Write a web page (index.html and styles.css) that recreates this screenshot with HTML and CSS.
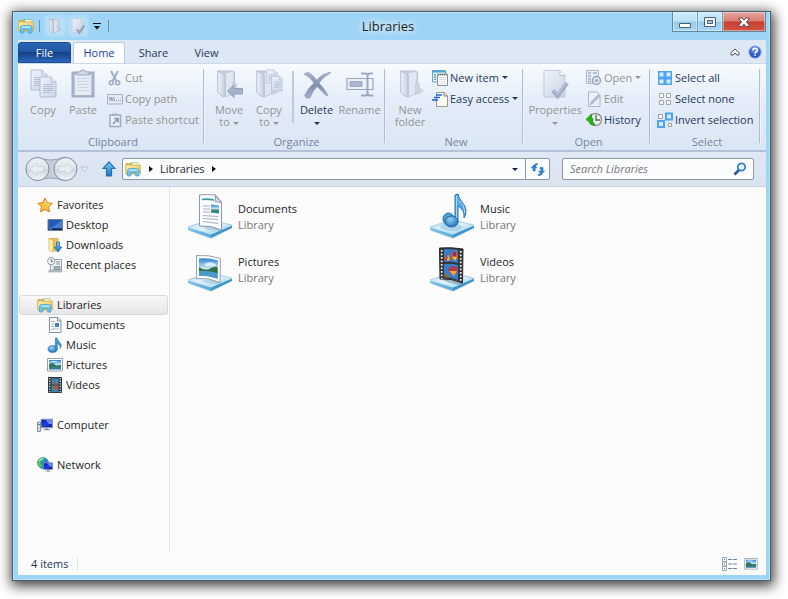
FILE: index.html
```html
<!DOCTYPE html>
<html lang="en">
<head>
    <meta charset="UTF-8">
    <meta name="viewport" content="width=device-width, initial-scale=1.0">
    <title>Libraries</title>
    <link rel="stylesheet" href="styles.css">
</head>
<body>
    <!-- shared icons -->
    <svg class="sprite" aria-hidden="true">
        <defs>
            <linearGradient id="gGrey" x1="0" y1="0" x2="1" y2="1">
                <stop offset="0" stop-color="#f1f5fa"/><stop offset="1" stop-color="#c2cde0"/>
            </linearGradient>
            <linearGradient id="gFolder" x1="0" y1="0" x2="1" y2="0">
                <stop offset="0" stop-color="#f3f6fa"/><stop offset="1" stop-color="#b9c4d8"/>
            </linearGradient>
            <linearGradient id="gSteel" x1="0" y1="0" x2="0" y2="1">
                <stop offset="0" stop-color="#a9b6cd"/><stop offset="0.5" stop-color="#7f8fae"/><stop offset="1" stop-color="#a5b2ca"/>
            </linearGradient>
            <linearGradient id="gYellow" x1="0" y1="0" x2="1" y2="1">
                <stop offset="0" stop-color="#fdf3b4"/><stop offset="1" stop-color="#e0b84c"/>
            </linearGradient>
            <linearGradient id="gBlue" x1="0" y1="0" x2="0" y2="1">
                <stop offset="0" stop-color="#7fd2f7"/><stop offset="1" stop-color="#1672bd"/>
            </linearGradient>
            <linearGradient id="gTray" x1="0" y1="0" x2="1" y2="1">
                <stop offset="0" stop-color="#b5dcf0"/><stop offset="0.5" stop-color="#e3f3fb"/><stop offset="1" stop-color="#8cc7e8"/>
            </linearGradient>
            <linearGradient id="gTrayL" x1="0" y1="0" x2="1" y2="0">
                <stop offset="0" stop-color="#7fc1e6"/><stop offset="1" stop-color="#58aadb"/>
            </linearGradient>
            <linearGradient id="gPhoto" x1="0" y1="0" x2="0" y2="1">
                <stop offset="0" stop-color="#2c7fd0"/><stop offset="0.5" stop-color="#cdeaf7"/><stop offset="0.6" stop-color="#3f8a66"/><stop offset="1" stop-color="#2d79a5"/>
            </linearGradient>
            <linearGradient id="gScreen" x1="0" y1="0" x2="1" y2="1">
                <stop offset="0" stop-color="#0a14a8"/><stop offset="0.5" stop-color="#1c3fe0"/><stop offset="1" stop-color="#0b1790"/>
            </linearGradient>
            <radialGradient id="gBall" cx="0.4" cy="0.3" r="0.8">
                <stop offset="0" stop-color="#8fd3f6"/><stop offset="1" stop-color="#1465b0"/>
            </radialGradient>
            <radialGradient id="gHelp" cx="0.5" cy="0.3" r="0.7">
                <stop offset="0" stop-color="#7ba6f2"/><stop offset="1" stop-color="#1238b8"/>
            </radialGradient>
            <linearGradient id="gNav" x1="0" y1="0" x2="0" y2="1">
                <stop offset="0" stop-color="#eef2f6"/><stop offset="0.48" stop-color="#dde4ec"/><stop offset="0.52" stop-color="#cdd7e1"/><stop offset="1" stop-color="#f3f7fa"/>
            </linearGradient>
        </defs>

        <symbol id="i-libraries" viewBox="0 0 16 16">
            <path d="M1 2.500h4l1 1h7.500v9.500H1z" fill="#e3be55" stroke="#c9a548" stroke-width=".8"/>
            <path d="M5.500 1.500h8v4h-8z" fill="#7cb85a"/>
            <path d="M7 2h6.500v3H7z" fill="#f7f2d0"/>
            <path d="M.6 4h14.800v8.500H.6z" fill="url(#gYellow)" stroke="#d6b04c" stroke-width=".8"/>
            <path d="M2.500 15V10q0-2.500 2.500-2.500h6.500Q14 7.500 14 10v5h-3.300v-3.500H5.800V15z" fill="#6cc4ec" stroke="#3f9fd2" stroke-width=".7"/>
            <path d="M4 9h8.500" stroke="#c5efff" stroke-width="1.300"/>
        </symbol>
        <symbol id="i-folder-grey" viewBox="0 0 28 32">
            <path d="M12 26h13l3-3-4-3z" fill="#a9b6cc" opacity=".5"/>
            <path d="M3 2h15l3 1v22l-9 4z" fill="#c3cdde" stroke="#a2b0c8"/>
            <path d="M8 5l11-3 1.500 1.500V26L11 30z" fill="#dde4ee" stroke="#a9b6cc" stroke-width=".8"/>
            <path d="M3 2l8 4v22.500l-2 1.500L3 25z" fill="url(#gFolder)" stroke="#9dabc4"/>
            <path d="M19 14l4 2v10l-4 1z" fill="#c7d0e0" stroke="#a9b6cc" stroke-width=".7"/>
        </symbol>
        <symbol id="i-page" viewBox="0 0 18 22">
            <path d="M1 1h11l5 5v15H1z" fill="url(#gGrey)" stroke="#a3b2cb"/>
            <path d="M12 1v5h5" fill="#dfe6f0" stroke="#a3b2cb"/>
            <path d="M4 8.500h10M4 10.500h10M4 12.500h10M4 14.500h10M4 16.500h7" stroke="#a3b2cb"/>
        </symbol>
        <symbol id="i-props" viewBox="0 0 28 30">
            <path d="M3 1.500h16l5 5V28H3z" fill="url(#gGrey)" stroke="#b3c0d5"/>
            <path d="M19 1.500v5h5" fill="#fff" stroke="#a7b5cd"/>
            <path d="M12 21.500l4.500 5.500L26 14" fill="none" stroke="#8e9dbb" stroke-width="4.200"/>
            <path d="M13 21.500l3.500 4L25 14" fill="none" stroke="#a8b5cd" stroke-width="1.500"/>
        </symbol>
        <symbol id="i-photo" viewBox="0 0 16 14">
            <path d="M.5.500h15v12.500H.5z" fill="#fff" stroke="#93a1ae"/>
            <path d="M2 2h12v9.500H2z" fill="url(#gPhoto)"/>
            <path d="M2 6.500q3-3 6 0t6 0V9H2z" fill="#35765a"/>
            <path d="M4 3h6v1H4z" fill="#e8f6ff" opacity=".8"/>
        </symbol>
        <symbol id="i-note" viewBox="0 0 16 16">
            <ellipse cx="5.600" cy="12" rx="4.600" ry="3.500" fill="url(#gBall)" stroke="#2573b4" stroke-width=".6"/>
            <path d="M8.400 12V1h1.800q.4 2.500 2.300 4.300 2.800 3 1 6.200.2-3.500-3.300-5V12z" fill="#3a97d7" stroke="#2470b0" stroke-width=".6"/>
        </symbol>
        <symbol id="i-film" viewBox="0 0 16 16">
            <path d="M1 0h14v16H1z" fill="#2d3940"/>
            <path d="M4.500 1.500h7v6h-7z" fill="#3c88b8"/><path d="M4.500 8.500h7V15h-7z" fill="#4283b1"/>
            <path d="M5 1.500l6 6h-3zM6 8.500h5.500v3L8 13z" fill="#b0563c"/>
            <path d="M2.700 1v15M13.300 1v15" stroke="#d5e6ec" stroke-width="1.300" stroke-dasharray="1.300 1.300"/>
        </symbol>
        <symbol id="i-tray" viewBox="0 0 46 20">
            <path d="M2 12l22 8 21-11-1-2z" fill="#9aa7b0" opacity=".35"/>
            <path d="M1 8L22 1l23 5-21 9z" fill="url(#gTray)" stroke="#86bfdf" stroke-width=".7"/>
            <path d="M1 8l23 7v4L1 11z" fill="url(#gTrayL)"/>
            <path d="M24 15l21-9v3L24 19z" fill="#3d96cd"/>
            <path d="M1 8l23 7 21-9" fill="none" stroke="#e6f7ff" stroke-width=".8"/>
        </symbol>
        <symbol id="i-monitor" viewBox="0 0 12 11">
            <path d="M.5.500h11v8H.5z" fill="url(#gScreen)" stroke="#8c97a6"/>
            <path d="M5 1l3 4h3V1z" fill="#6a87f5"/>
            <path d="M5 9h2v1h2v1H3v-1h2z" fill="#7d8894"/>
        </symbol>
    </svg>

    <div class="window">
        <header class="titlebar">
            <div class="quick-access">
                <svg class="icon"><use href="#i-libraries"/></svg>
                <span class="quick-sep"></span>
                <button class="quick-btn" aria-label="New folder"><svg class="icon" viewBox="0 0 28 32"><use href="#i-folder-grey"/></svg></button>
                <button class="quick-btn" aria-label="Properties"><svg class="icon" viewBox="0 0 28 30"><use href="#i-props"/></svg></button>
                <button class="quick-more" aria-label="Customize">
                    <svg width="8" height="7" viewBox="0 0 8 7"><path d="M0 .5h8" stroke="#111"/><path d="M1 3h6L4 6.500z" fill="#111"/></svg>
                </button>
                <span class="quick-sep"></span>
            </div>
            <h1 class="title">Libraries</h1>
            <div class="window-buttons">
                <button class="win-btn" aria-label="Minimize">
                    <svg width="14" height="14" viewBox="0 0 14 14"><path d="M1.500 8.500h11v4h-11z" fill="#fff" stroke="#4b5f73"/></svg>
                </button>
                <button class="win-btn" aria-label="Maximize">
                    <svg width="14" height="14" viewBox="0 0 14 14"><path d="M1.500 2.500h11v9h-11z" fill="#fff" stroke="#4b5f73"/><path d="M4.500 5.500h5v3h-5z" fill="#9ec9e8" stroke="#4b5f73"/></svg>
                </button>
                <button class="win-btn close" aria-label="Close">
                    <svg width="14" height="14" viewBox="0 0 14 14"><path d="M2 3h3l2 2 2-2h3v1L9.500 7l2.500 3v1.500H9l-2-2.300-2 2.300H2V10l2.500-3L2 4z" fill="#fff" stroke="#5d3a44" stroke-width=".9"/></svg>
                </button>
            </div>
        </header>

        <div class="tabs">
            <button class="tab file">File</button>
            <button class="tab active">Home</button>
            <button class="tab">Share</button>
            <button class="tab">View</button>
            <div class="tab-tools">
                <button aria-label="Minimize the ribbon">
                    <svg width="10" height="8" viewBox="0 0 10 8"><path d="M1 4.500L5 1l4 3.500V7H7L5 5.200 3 7H1z" fill="#fff" stroke="#4a4f58"/></svg>
                </button>
                <button aria-label="Help">
                    <svg width="14" height="14" viewBox="0 0 14 14"><circle cx="7" cy="7" r="6.300" fill="url(#gHelp)" stroke="#b5c6e2"/><path d="M4.800 5.500Q4.800 3.300 7 3.300t2.300 1.900Q9.300 6.300 8 7q-.9.500-.9 1.500M7.100 9.600v1.500" fill="none" stroke="#fff" stroke-width="1.500"/></svg>
                </button>
            </div>
        </div>

        <div class="ribbon">
            <section class="group clipboard">
                <div class="controls">
                    <button class="big" disabled>
                        <svg class="big-icon" viewBox="0 0 28 30"><use href="#i-page" x="1" y="0" width="18" height="22"/><use href="#i-page" x="10" y="7" width="18" height="22"/></svg>
                        <span>Copy</span>
                    </button>
                    <button class="big" disabled>
                        <svg class="big-icon" viewBox="0 0 28 30">
                            <path d="M3.500 3.500h21v24h-21z" fill="#aab7cd" stroke="#8e9dba" stroke-width="2"/>
                            <path d="M6 6h16v20H6z" fill="#e6ecf4"/>
                            <path d="M8 9.500h12M8 12.500h12M8 15.500h12M8 18.500h12M8 21.500h12" stroke="#c3cddd"/>
                            <path d="M8 6V3h3q0-2 3-2t3 2h3v3z" fill="#ccd5e3" stroke="#8696b4"/>
                        </svg>
                        <span>Paste</span>
                    </button>
                    <div class="stack">
                        <button class="small" disabled>
                            <svg class="icon" viewBox="0 0 16 16"><path d="M4 1l5.500 10M11 1L5.500 11" stroke="#8d9cb9" stroke-width="2"/><circle cx="4.300" cy="12.700" r="2" fill="none" stroke="#8d9cb9" stroke-width="1.500"/><circle cx="10.700" cy="12.700" r="2" fill="none" stroke="#8d9cb9" stroke-width="1.500"/></svg>
                            Cut
                        </button>
                        <button class="small" disabled>
                            <svg class="icon" viewBox="0 0 16 16"><path d="M.5 3.500h15v9.500H.5z" fill="#e3eaf3" stroke="#93a2be"/><path d="M2.500 6l1 4 1-4 1 4M6.500 6l1 4" fill="none" stroke="#6f7f9e"/><path d="M9 9.500h1M11 9.500h1M13 9.500h1" stroke="#6f7f9e"/></svg>
                            Copy path
                        </button>
                        <button class="small" disabled>
                            <svg class="icon" viewBox="0 0 16 16"><path d="M3 3h10.500v11.500H3z" fill="#f0f4f9" stroke="#8e9dba" stroke-width="1.600"/><path d="M5.500 3.500V2h5v1.500z" fill="#c3cddd" stroke="#8e9dba"/><path d="M7 6.500h4v4M10.500 7L6 12" fill="none" stroke="#7484a4" stroke-width="1.700"/></svg>
                            Paste shortcut
                        </button>
                    </div>
                </div>
                <h2>Clipboard</h2>
            </section>

            <section class="group organize">
                <div class="controls">
                    <button class="big" disabled>
                        <svg class="big-icon" viewBox="0 0 28 30"><use href="#i-folder-grey" x="0" y="0" width="26" height="30"/><path d="M12.500 22l6.500-6v3.500h8.500v5.500H19v3.500z" fill="#93a2be" stroke="#7c8cab"/></svg>
                        <span>Move<br>to <i class="arrow"></i></span>
                    </button>
                    <button class="big" disabled>
                        <svg class="big-icon" viewBox="0 0 28 30"><use href="#i-folder-grey" x="-1" y="0" width="26" height="30"/><use href="#i-page" x="11" y="0" width="12" height="15"/><use href="#i-page" x="16" y="6" width="13" height="17"/></svg>
                        <span>Copy<br>to <i class="arrow"></i></span>
                    </button>
                    <span class="inner-sep"></span>
                    <button class="big">
                        <svg class="big-icon" viewBox="0 0 28 30"><path d="M1 5l4-2q5 3 8.500 8Q20 4 28 3l-1 1.500Q21 7 16 14q6 6 9 12.500l-1.500.500q-5-5-9.500-9.500Q9 23 7 29q-4 1-5.500-2Q4 20 11 14 7 8 1 5z" fill="url(#gSteel)" stroke="#8f9eba" stroke-width=".6"/></svg>
                        <span>Delete<br><i class="arrow"></i></span>
                    </button>
                    <button class="big" disabled>
                        <svg class="big-icon" viewBox="0 0 28 30"><path d="M1 9.500h26v11H1z" fill="#edf2f8" stroke="#8493b1" stroke-width="1.200"/><path d="M4 12.500h12v5H4z" fill="#9caac3" stroke="#8797b4"/><path d="M15 4.500h4q2.500 0 2.500 2 0-2 2.500-2h3M21.500 6v19M15 26.500h4q2.500 0 2.500-2 0 2 2.500 2h3" fill="none" stroke="#8797b4" stroke-width="2"/></svg>
                        <span>Rename</span>
                    </button>
                </div>
                <h2>Organize</h2>
            </section>

            <section class="group new">
                <div class="controls">
                    <button class="big" disabled>
                        <svg class="big-icon" viewBox="0 0 28 30"><use href="#i-folder-grey" x="2" y="0" width="26" height="30"/></svg>
                        <span>New<br>folder</span>
                    </button>
                    <div class="stack">
                        <button class="small">
                            <svg class="icon" viewBox="0 0 16 16"><path d="M.5.500h13V12H.5z" fill="#e3f2fa" stroke="#68a9cf"/><path d="M.5 1.500h13" stroke="#49a4d6" stroke-width="2"/><path d="M3 4v6" stroke="#5c9dc4" stroke-width="2" stroke-dasharray="1.500 1"/><path d="M5.500 4.500h10v11h-10z" fill="#fff" stroke="#8d8d8d"/><path d="M6 4.500h9" stroke="#777" stroke-width="2" stroke-dasharray="1 1"/><path d="M7 7.500h7M7 9.500h7M7 11.500h7M7 13.500h7" stroke="#d0d0d0" stroke-width=".8"/></svg>
                            New item <i class="arrow"></i>
                        </button>
                        <button class="small">
                            <svg class="icon" viewBox="0 0 16 16"><path d="M4.500 1.500h8l3 3v11h-11z" fill="#fdfdf8" stroke="#9a9a90"/><path d="M12 1.500V5h3.500" fill="#fff" stroke="#77776d"/><path d="M4 4h6M2 6.500h6M0 9h6" stroke="#1767dc" stroke-width="1.300"/></svg>
                            Easy access <i class="arrow"></i>
                        </button>
                    </div>
                </div>
                <h2>New</h2>
            </section>

            <section class="group open">
                <div class="controls">
                    <button class="big wide" disabled>
                        <svg class="big-icon" viewBox="0 0 28 30"><use href="#i-props"/></svg>
                        <span>Properties<br><i class="arrow"></i></span>
                    </button>
                    <div class="stack">
                        <button class="small" disabled>
                            <svg class="icon" viewBox="0 0 16 16"><path d="M.5.500h12v13H.5z" fill="#e6ecf4" stroke="#9aa8c1"/><path d="M2 3h3M7 3h4M2 6h3M2 9h3M2 11.500h3" stroke="#8c9bb8" stroke-width="1.300"/><circle cx="10.500" cy="10.500" r="4" fill="#dae2ed" stroke="#8493b1" stroke-width="1.500"/><circle cx="10.500" cy="10.500" r="1.300" fill="#7585a6"/></svg>
                            Open <i class="arrow"></i>
                        </button>
                        <button class="small" disabled>
                            <svg class="icon" viewBox="0 0 16 16"><path d="M2.500 1h8.500l3 3v11.500H2.500z" fill="#edf2f8" stroke="#9dabc4"/><path d="M13.500 5L7 12l-2.500 1.500L5.500 11 12 4z" fill="#c0cadb" stroke="#8695b2"/></svg>
                            Edit
                        </button>
                        <button class="small">
                            <svg class="icon" viewBox="0 0 16 16"><circle cx="9.500" cy="7.500" r="6" fill="#eef3ef" stroke="#899b91" stroke-width="1.500"/><path d="M10 3v5h4" fill="none" stroke="#596b62" stroke-width="1.400"/><path d="M0 7.500L5.500 2v3Q8 8 6.500 9.500L9 13q-5 .5-6-3.500z" fill="#22b90f" stroke="#128407" stroke-width=".7"/></svg>
                            History
                        </button>
                    </div>
                </div>
                <h2>Open</h2>
            </section>

            <section class="group select">
                <div class="controls">
                    <div class="stack">
                        <button class="small">
                            <svg class="icon" viewBox="0 0 16 16"><path d="M1 1h14v14H1z" fill="#4ba5f3"/><path d="M2.500 2.500h4v4h-4zM9.500 2.500h4v4h-4zM2.500 9.500h4v4h-4zM9.500 9.500h4v4h-4z" fill="#d5ecff"/></svg>
                            Select all
                        </button>
                        <button class="small">
                            <svg class="icon" viewBox="0 0 16 16"><path d="M2.500 2.500h4v4h-4zM9.500 2.500h4v4h-4zM2.500 9.500h4v4h-4zM9.500 9.500h4v4h-4z" fill="#f7f7f7" stroke="#a5a5a5"/></svg>
                            Select none
                        </button>
                        <button class="small">
                            <svg class="icon" viewBox="0 0 16 16"><path d="M1.500 2.500h4v4h-4zM11.500 11.500h3v3h-3z" fill="#f7f7f7" stroke="#a0a0a0"/><path d="M9 1.500h6v6H9zM1 9h6v6H1z" fill="#d5ecff" stroke="#4ba5f3" stroke-width="2"/></svg>
                            Invert selection
                        </button>
                    </div>
                </div>
                <h2>Select</h2>
            </section>
        </div>

        <div class="navbar">
            <div class="history">
                <svg width="66" height="26" viewBox="0 0 66 26">
                    <path d="M12 1q13 6 28 0v24q-15-6-28 0z" fill="#c3ced9" stroke="#98a4b1"/>
                    <circle cx="12.500" cy="13" r="11.500" fill="url(#gNav)" stroke="#818c98"/>
                    <circle cx="40.500" cy="13" r="11.500" fill="url(#gNav)" stroke="#818c98"/>
                    <path d="M5 13l7-6v3.500h7v5h-7V19z" fill="#e9eef2" stroke="#c8d0d8" stroke-width=".8"/>
                    <path d="M48 13l-7-6v3.500h-7v5h7V19z" fill="#e9eef2" stroke="#c8d0d8" stroke-width=".8"/>
                    <path d="M56 11h7l-3.500 4.500z" fill="#eef3f8" stroke="#b4c0cd"/>
                </svg>
            </div>
            <button class="up" aria-label="Up">
                <svg width="14" height="16" viewBox="0 0 14 16"><path d="M7 1L1 7.500h3.500V15h5V7.500H13z" fill="url(#gBlue)" stroke="#2872b4" stroke-width="1.200"/></svg>
            </button>
            <div class="address">
                <svg class="icon"><use href="#i-libraries"/></svg>
                <i class="crumb-arrow"></i>
                <a href="#">Libraries</a>
                <i class="crumb-arrow"></i>
                <button class="drop" aria-label="Previous locations"><i class="arrow dark"></i></button>
                <button class="refresh" aria-label="Refresh">
                    <svg width="14" height="14" viewBox="0 0 14 14"><path d="M0 6L3 3l3 3H4.200v3H2V6zM3 3.500Q4 1 6.500 1.500v1Q5 2.500 4.200 5z" fill="#2f86d6" stroke="#2369b4" stroke-width=".5"/><path d="M7.500 9l3 3.500 3-3.500H12V5.500H9V7h1v2zM10.500 12.500Q9 14 7 13.500v-1q1.500 0 2.500-1.500z" fill="#2f86d6" stroke="#2369b4" stroke-width=".5"/></svg>
                </button>
            </div>
            <label class="search">
                <input type="search" placeholder="Search Libraries" aria-label="Search Libraries">
                <svg width="14" height="14" viewBox="0 0 14 14"><path d="M1.500 12.500L6 8" stroke="#1f56a5" stroke-width="2.600"/><circle cx="8.500" cy="5" r="3.700" fill="#eaf5fd" stroke="#3482c8" stroke-width="1.800"/></svg>
            </label>
        </div>

        <div class="content">
            <nav class="sidebar">
                <ul>
                    <li><a href="#" class="root"><svg class="icon" viewBox="0 0 16 16"><path d="M8 1l2.200 4.700 5.100.6-3.800 3.500 1 5.100L8 12.400l-4.500 2.500 1-5.100L.7 6.300l5.100-.6z" fill="#fbc43c" stroke="#d77f22"/><path d="M8 3.500l1.500 3.300 3 .5" fill="none" stroke="#fff1a5"/></svg>Favorites</a></li>
                    <li><a href="#"><svg class="icon" viewBox="0 0 16 16"><path d="M1 2.500h14.500v11H1z" fill="#2459b8" stroke="#6b7f99"/><path d="M1.500 11q6-1 13.500-8v8z" fill="#477dd8"/><path d="M1.500 11.500H15v1.500H1.500z" fill="#1a2740"/><path d="M2 12h3" stroke="#4eaadb"/></svg>Desktop</a></li>
                    <li><a href="#"><svg class="icon" viewBox="0 0 16 16"><path d="M2 1.500h9V14H5z" fill="#e8bf50" stroke="#c8a046" stroke-width=".7"/><path d="M2 1.500l4 1.500v12l-4-2z" fill="#fff0b0" stroke="#d6b252" stroke-width=".7"/><path d="M9.500 5h3v5H15l-4 5-4-5h2.500z" fill="url(#gBlue)" stroke="#226eb0" stroke-width=".8"/></svg>Downloads</a></li>
                    <li><a href="#"><svg class="icon" viewBox="0 0 16 16"><path d="M4.500 2.500h10v12h-11v-3z" fill="#edf2f4" stroke="#93a2ac"/><path d="M2 13h13v2H2z" fill="#b4c2ca" stroke="#8c9aa4" stroke-width=".6"/><path d="M7 9.500h6v3H7zM9 5h4M9 7h4" fill="#a4b3bd" stroke="#8b99a3"/><circle cx="4.200" cy="4.200" r="3.600" fill="#f2f7fa" stroke="#8f9da8"/><path d="M4.200 2v2.500H6" fill="none" stroke="#5c6b77"/></svg>Recent places</a></li>
                </ul>
                <ul>
                    <li><a href="#" class="root current"><svg class="icon"><use href="#i-libraries"/></svg>Libraries</a></li>
                    <li><a href="#"><svg class="icon" viewBox="0 0 16 16"><path d="M2.500.5H11l3 3v12H2.500z" fill="#fafcfd" stroke="#82909b"/><path d="M10.500.500V4H14" fill="#dde6ec" stroke="#82909b"/><path d="M4 4.500h4M4 7h3M4 9.500h3M4 12h8" stroke="#a9b5c0"/><path d="M8 6h4v4H8z" fill="#3f7cc5"/></svg>Documents</a></li>
                    <li><a href="#"><svg class="icon"><use href="#i-note"/></svg>Music</a></li>
                    <li><a href="#"><svg class="icon"><use href="#i-photo" y="1" width="16" height="14"/></svg>Pictures</a></li>
                    <li><a href="#"><svg class="icon"><use href="#i-film"/></svg>Videos</a></li>
                </ul>
                <ul>
                    <li><a href="#" class="root"><svg class="icon" viewBox="0 0 16 16"><path d="M.5 5h3v9.500h-3z" fill="#d3dbe1" stroke="#83909b"/><path d="M1 7.500h2" stroke="#31a34d"/><use href="#i-monitor" x="3.500" y="1" width="12.500" height="13"/></svg>Computer</a></li>
                </ul>
                <ul>
                    <li><a href="#" class="root"><svg class="icon" viewBox="0 0 16 16"><circle cx="6" cy="6" r="5.500" fill="#2f82da" stroke="#2b68ad" stroke-width=".6"/><path d="M2 2.500Q5-.5 8 1L6 4 3 5 5 8l-1 3Q.5 9 .8 6z" fill="#4bd04c"/><path d="M2 4q2-3 4-2.500" fill="none" stroke="#c8f8ef"/><use href="#i-monitor" x="6" y="4.500" width="10" height="11"/></svg>Network</a></li>
                </ul>
            </nav>

            <main class="tiles">
                <a href="#" class="tile">
                    <svg class="tile-icon" viewBox="0 0 46 46">
                        <use href="#i-tray" x="0" y="26" width="46" height="20"/>
                        <path d="M15 34q11-3 20 2l-2 2-12-1z" fill="#8eb8cf" opacity=".5"/>
                        <path d="M12.500 2q8-1 16 0l6 7V37q-11-5-22-4z" fill="#fbfcff" stroke="#8e98ad"/>
                        <path d="M28 2.500q1 4 0 6l6.500 1z" fill="#d8e3ee" stroke="#8e98ad"/>
                        <path d="M15 6.500q5-1 12 .5" fill="none" stroke="#3e9a9e" stroke-width="1.600"/>
                        <path d="M16 13h7M16 16h7M16 19h7M16 22.500l15 1M16 25.500l15 1M16 28.500l15 2" stroke="#a9a9cb"/>
                        <path d="M24 11.500l8 1v8l-8-1z" fill="url(#gPhoto)"/>
                    </svg>
                    <span class="tile-text"><b>Documents</b><small>Library</small></span>
                </a>
                <a href="#" class="tile">
                    <svg class="tile-icon" viewBox="0 0 46 46">
                        <use href="#i-tray" x="0" y="26" width="46" height="20"/>
                        <ellipse cx="22" cy="34" rx="11" ry="4" fill="#6daed5" opacity=".4"/>
                        <path d="M26 29V2l3-1q1 5 4 8 7 8 2 16 1-8-6-12v17z" fill="#59aae2" stroke="#2b76b8"/>
                        <path d="M27.500 3v23M30 8q6 4 5.500 12" fill="none" stroke="#a6ddfb"/>
                        <ellipse cx="19.500" cy="26" rx="5.500" ry="6" fill="#509fd7" stroke="#236eae"/>
                        <ellipse cx="22.500" cy="28.500" rx="6.500" ry="5.500" fill="url(#gBall)" stroke="#2167a7"/>
                    </svg>
                    <span class="tile-text"><b>Music</b><small>Library</small></span>
                </a>
                <a href="#" class="tile">
                    <svg class="tile-icon" viewBox="0 0 46 46">
                        <use href="#i-tray" x="0" y="26" width="46" height="20"/>
                        <path d="M14 35q11-3 20 1l-2 2-12-1z" fill="#8eb8cf" opacity=".5"/>
                        <path d="M9.500 9.500q12-1 24 3l-.5 24q-11-5-23.500-4z" fill="#fdfeff" stroke="#98a2ad"/>
                        <path d="M12 12.500q10-1 19 2l-.5 18q-9-3-18.500-3z" fill="url(#gPhoto)"/>
                        <path d="M12 21q5 4 9 3 5-4 9.500-3v6q-9 3-18.500 0z" fill="#326f43"/>
                        <path d="M12 25q8-1 18.500 2v5.500q-9-3-18.500-3z" fill="#4b9acb"/>
                        <path d="M17 18l6-2 6 2-1 2h-9z" fill="#fff" opacity=".7"/>
                    </svg>
                    <span class="tile-text"><b>Pictures</b><small>Library</small></span>
                </a>
                <a href="#" class="tile">
                    <svg class="tile-icon" viewBox="0 0 46 46">
                        <use href="#i-tray" x="0" y="26" width="46" height="20"/>
                        <path d="M14 34q11-2 20 3l-3 2-13-3z" fill="#5e7f92" opacity=".5"/>
                        <path d="M10.500 2q12-1 23.500 1l-.5 34q-11-5-22.500-4z" fill="#333435" stroke="#272a2d"/>
                        <path d="M15 3q7-.5 14 1v13q-7-2-14-1zM15 18q7-1 14 1v15q-7-3-14-3z" fill="#337fcb"/>
                        <path d="M15 14l4-7 2 8z" fill="#d33f35"/><path d="M19 8l2 6-3 1z" fill="#f4ba31"/>
                        <ellipse cx="25.500" cy="9.500" rx="3.500" ry="4.500" fill="#d35b27"/><path d="M23 11h5l-2 4z" fill="#f0bc42"/><path d="M24 6h3v4h-3z" fill="#70388a"/>
                        <ellipse cx="24" cy="24" rx="4.500" ry="4" fill="#b83845"/><path d="M20 25h8l-3 5z" fill="#eda53c"/><path d="M15 27l6 3-1 2-5-1z" fill="#7f6a4e"/>
                        <path d="M12.700 4v29M31.700 5v30" stroke="#f2f6f8" stroke-width="1.700" stroke-dasharray="1.700 1.800"/>
                    </svg>
                    <span class="tile-text"><b>Videos</b><small>Library</small></span>
                </a>
            </main>
        </div>

        <footer class="statusbar">
            <span class="count">4 items</span>
            <div class="views">
                <button aria-label="Details view">
                    <svg width="16" height="14" viewBox="0 0 16 14"><path d="M.5.500h4v4h-4zM.5 5h4v4h-4zM.5 9.500h4v4h-4z" fill="#fff" stroke="#95a2b4"/><path d="M2 2.500h1M2 11.500h1" stroke="#3f7fbb"/><path d="M2 7h1" stroke="#d33"/><path d="M6 2.500h4M11 2.500h4M6 7h4M11 7h4M6 11.500h4M11 11.500h4" stroke="#77808f" stroke-width="1.200"/></svg>
                </button>
                <button aria-label="Large icons view">
                    <svg width="14" height="12" viewBox="0 0 16 14"><use href="#i-photo"/></svg>
                </button>
            </div>
        </footer>
    </div>
</body>
</html>
```

FILE: styles.css
```css
* {
    margin: 0;
    padding: 0;
    box-sizing: border-box;
}

body {
    min-height: 100vh;
    padding: 11px 17px 18px 12px;
    display: flex;
    background: #fff;
    font-family: 'Segoe UI', 'Open Sans', 'Noto Sans', sans-serif;
    font-size: 11px;
    line-height: 12px;
    color: #1e1e1e;
}

button {
    border: none;
    background: none;
    font: inherit;
    color: inherit;
    display: flex;
    align-items: center;
    justify-content: center;
    white-space: nowrap;
}

a {
    color: inherit;
    text-decoration: none;
}

ul {
    list-style: none;
}

svg {
    display: block;
    flex: none;
}

.sprite {
    position: absolute;
    width: 0;
    height: 0;
}

.icon {
    width: 16px;
    height: 16px;
}

.arrow {
    display: inline-block;
    border: 3px solid transparent;
    border-top-color: currentColor;
    border-bottom: none;
    vertical-align: middle;
}

/* window frame */
.window {
    flex: 1;
    min-width: 0;
    display: flex;
    flex-direction: column;
    padding: 0 4px 5px 5px;
    background: #9ed4f6;
    border: 1px solid #45606f;
    box-shadow: inset 0 0 0 1px #b9e2fa, 1px 3px 12px 2px rgba(0, 0, 0, 0.75);
}

.titlebar {
    height: 28px;
    display: grid;
    grid-template-columns: 1fr auto 1fr;
    align-items: center;
}

.quick-access {
    display: flex;
    align-items: center;
    gap: 5px;
}

.quick-sep {
    width: 1px;
    height: 12px;
    background: #6a8fa8;
}

.quick-btn {
    width: 16px;
    margin-left: 2px;
    background: rgba(255, 255, 255, 0.3);
    box-shadow: 0 0 4px 2px rgba(255, 255, 255, 0.3);
}

.quick-more {
    width: 12px;
}

.title {
    padding-right: 8px;
    font-size: 13px;
    line-height: 20px;
    font-weight: normal;
    text-shadow: 0 0 6px #fff, 0 0 10px #fff;
}

.window-buttons {
    align-self: start;
    justify-self: end;
    display: flex;
    border: 1px solid #5f88a2;
    border-top: none;
}

.win-btn {
    width: 25px;
    height: 19px;
    background: linear-gradient(#cdeafb, #bde2f8 48%, #96cbea 52%, #a8d9f4);
    border-right: 1px solid #6e9ab5;
    box-shadow: inset 0 0 0 1px rgba(255, 255, 255, 0.4);
}

.win-btn.close {
    width: 42px;
    border-right: none;
    background: linear-gradient(#e6a6a0, #d97c74 48%, #c53d30 52%, #d45545);
}

/* ribbon tabs */
.tabs {
    height: 23px;
    display: flex;
    align-items: flex-end;
    background: #dde8f5;
    color: #1e395b;
}

.tab {
    width: 53px;
    height: 21px;
    border-radius: 3px 3px 0 0;
}

.tab.file {
    color: #fff;
    margin-right: 2px;
    border: 1px solid #1f4a94;
    background: linear-gradient(#2a66b4, #1f57a6 45%, #173f86 50%, #2a67bd);
}

.tab.active {
    width: 52px;
    margin-right: 2px;
    color: #1b3f9c;
    background: #fbfdff;
    border: 1px solid #b9c8dc;
    border-bottom: none;
}

.tab-tools {
    align-self: center;
    margin-left: auto;
    padding-right: 4px;
    display: flex;
    align-items: center;
    gap: 8px;
}

/* ribbon body */
.ribbon {
    height: 89px;
    display: flex;
    background: linear-gradient(#f8fbff, #e4edf8 40%, #dbe6f4);
    border-top: 1px solid #cbd8e8;
    border-bottom: 2px solid #b3c2d8;
}

.group {
    display: flex;
    flex-direction: column;
    margin: 3px 0 2px;
    padding: 0 2px 0 4px;
    background: linear-gradient(90deg, #aebbd0 50%, #eef4fb 50%) right 2px / 2px 74px no-repeat;
}

.clipboard {
    width: 187px;
    padding-left: 5px;
}

.organize {
    width: 181px;
}

.new {
    width: 138px;
}

.open {
    width: 127px;
}

.select {
    width: 110px;
}

.group h2 {
    font-size: 11px;
    line-height: 12px;
    font-weight: normal;
    text-align: center;
    color: #74849d;
}

.controls {
    flex: 1;
    display: flex;
    color: #1e395b;
}

.controls button:disabled {
    color: #939393;
}

.controls button:disabled svg {
    opacity: 0.8;
}

.big {
    width: 40px;
    flex-direction: column;
    justify-content: flex-start;
    gap: 5px;
    padding-top: 2px;
}

.big.wide {
    width: 54px;
}

.big-icon {
    width: 28px;
    height: 30px;
}

.organize .big:nth-of-type(n + 3) {
    width: 43px;
}

.inner-sep {
    width: 2px;
    height: 52px;
    margin: 4px 1px 0 3px;
    background: #bccadd;
}

.stack {
    padding-left: 4px;
}

.new .stack,
.select .stack {
    padding-left: 2px;
}

.small {
    height: 21px;
    gap: 2px;
}

.small .arrow {
    margin-left: 1px;
}

/* address bar */
.navbar {
    height: 35px;
    padding: 0 12px 0 7px;
    display: flex;
    align-items: center;
    background: linear-gradient(#dfe8f4, #d9e4f0);
    border-bottom: 1px solid #c5d3e3;
}

.up {
    width: 14px;
    margin: 0 6px 0 11px;
}

.address {
    flex: 424;
    height: 22px;
    padding-left: 2px;
    display: flex;
    align-items: center;
    gap: 8px;
    background: #fbfcfe;
    border: 1px solid #8c98a6;
    border-radius: 2px;
}

.address a {
    margin: 0 -1px;
}

.crumb-arrow {
    border: 3px solid transparent;
    border-left: 4px solid #111;
    border-right: none;
}

.drop {
    width: 12px;
    margin-left: auto;
    color: #12234a;
}

.refresh {
    width: 24px;
    height: 20px;
    border-left: 1px solid #8c98a6;
    margin-left: -4px;
}

.search {
    flex: 177;
    min-width: 0;
    height: 22px;
    margin-left: 12px;
    padding: 0 6px 0 7px;
    display: flex;
    align-items: center;
    background: #fbfcfe;
    border: 1px solid #8c98a6;
    border-radius: 2px;
}

.search input {
    flex: 1;
    min-width: 0;
    border: none;
    outline: none;
    background: none;
    font: inherit;
}

.search input::placeholder {
    font-style: italic;
    color: #777;
}

/* folder tree and files */
.content {
    flex: 1;
    display: flex;
    background: #fcfcfc;
}

.sidebar {
    width: 152px;
    padding: 8px 1px 0;
    display: flex;
    flex-direction: column;
    gap: 20px;
    border-right: 1px solid #dce6f2;
}

.sidebar a {
    height: 20px;
    padding-left: 27px;
    display: flex;
    align-items: center;
    gap: 3px;
    border: 1px solid transparent;
}

.sidebar a.root {
    padding-left: 17px;
    gap: 4px;
}

.sidebar a.current {
    border-color: #d9d9d9;
    border-radius: 3px;
    background: linear-gradient(#f8f8f8, #e6e6e6);
}

.tiles {
    flex: 1;
    padding: 6px 0 0 17px;
    display: grid;
    grid-template-columns: repeat(auto-fill, 242px);
    grid-auto-rows: 53px;
    align-content: start;
}

.tile {
    display: flex;
    align-items: flex-start;
    gap: 5px;
}

.tile-icon {
    width: 46px;
    height: 46px;
}

.tile-text {
    padding-top: 8px;
    line-height: 16px;
}

.tile-text b,
.tile-text small {
    display: block;
    font-size: 11px;
    font-weight: normal;
}

.tile-text small {
    color: #777;
}

/* status bar */
.statusbar {
    height: 22px;
    padding: 0 8px 0 13px;
    display: flex;
    align-items: center;
    justify-content: space-between;
    background: #fcfcfc;
    color: #1e395b;
}

.count {
    padding-right: 9px;
    border-right: 1px solid #d5e3f2;
}

.views {
    display: flex;
    gap: 6px;
}
```
